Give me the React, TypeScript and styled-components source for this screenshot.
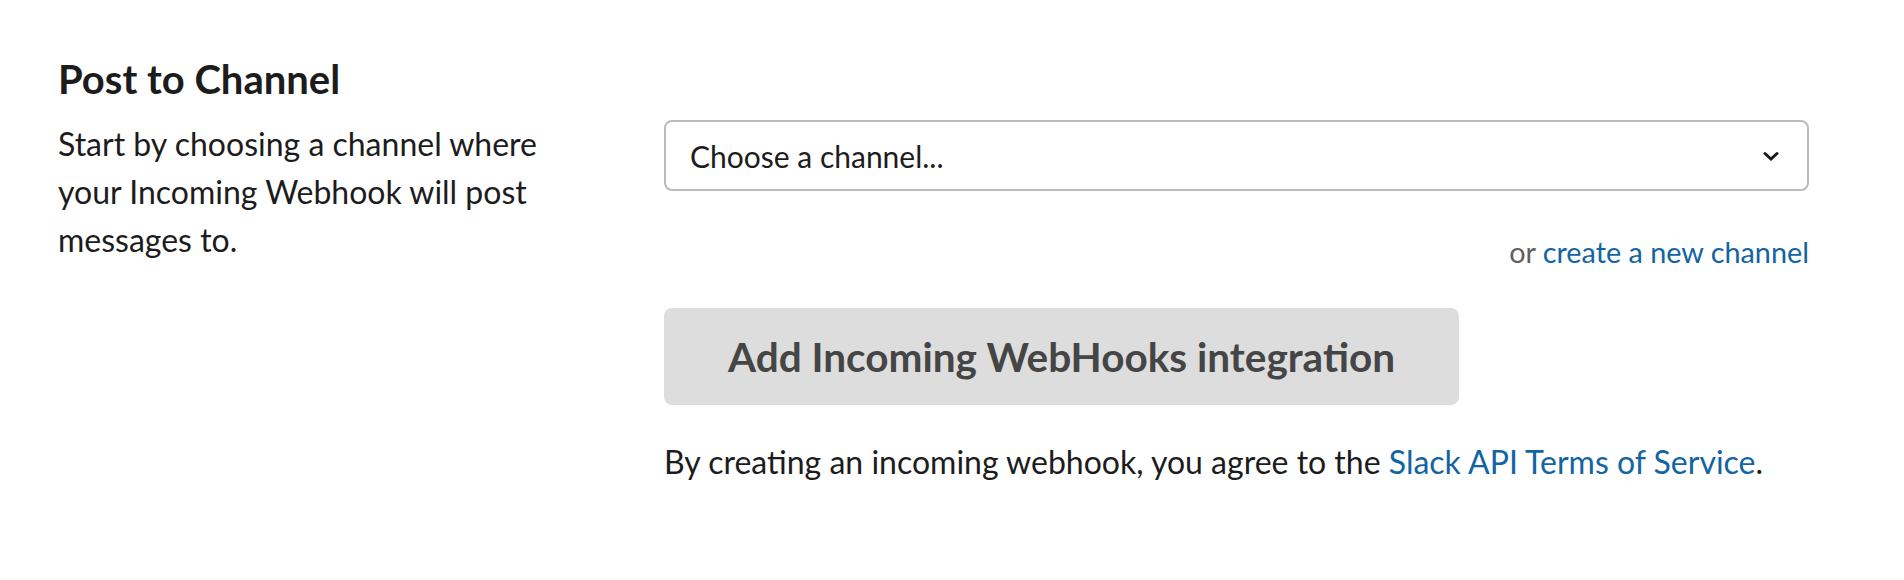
import React from "react";
import styled, { createGlobalStyle } from "styled-components";

const Global = createGlobalStyle`
  html, body { margin: 0; padding: 0; background: #ffffff; }
  body { font-family: Lato, "Noto Sans", sans-serif; color: #1d1c1d; }
`;

const Page = styled.div`
  padding: 55px 0 0 58px;
`;

const Heading = styled.h3`
  margin: 0;
  font-size: 40px;
  line-height: 48px;
  font-weight: 700;
  color: #1d1c1d;
`;

const Row = styled.div`
  display: grid;
  grid-template-columns: 606px 1145px;
  margin-top: 17px;
`;

const Description = styled.p`
  margin: 0;
  max-width: 520px;
  font-size: 32px;
  line-height: 48px;
`;

const Form = styled.div`
  display: flex;
  flex-direction: column;
  align-items: flex-start;
`;

const Select = styled.div`
  box-sizing: border-box;
  width: 100%;
  height: 71px;
  border: 2px solid #bbbbbb;
  border-radius: 8px;
  display: flex;
  align-items: center;
  justify-content: space-between;
  padding: 0 28px 0 24px;
  font-size: 30px;
  color: #1d1c1d;
`;

const Hint = styled.div`
  align-self: flex-end;
  margin-top: 37px;
  font-size: 28.8px;
  line-height: 48px;
  color: #616061;
`;

const Link = styled.a`
  color: #1264a3;
  text-decoration: none;
`;

const Button = styled.button`
  margin-top: 32px;
  border: none;
  border-radius: 8px;
  background: #dddddd;
  color: #454545;
  font-family: Lato, "Noto Sans", sans-serif;
  font-weight: 700;
  font-size: 40.5px;
  line-height: 53px;
  padding: 22px 64px;
`;

const Terms = styled.p`
  margin: 33px 0 0;
  font-size: 32px;
  line-height: 48px;
`;

const Chevron = () => (
  <svg width="16" height="10" viewBox="0 0 16 10" fill="none">
    <path d="M2 2.5l6 5.5 6-5.5" stroke="#1d1c1d" strokeWidth="3" strokeLinecap="round" strokeLinejoin="miter" />
  </svg>
);

export default function App() {
  return (
    <>
      <Global />
      <Page>
        <Heading>Post to Channel</Heading>
        <Row>
          <Description>
            Start by choosing a channel where your Incoming Webhook will post messages to.
          </Description>
          <Form>
            <Select>
              <span>Choose a channel...</span>
              <Chevron />
            </Select>
            <Hint>
              or <Link href="#">create a new channel</Link>
            </Hint>
            <Button>Add Incoming WebHooks integration</Button>
            <Terms>
              By creating an incoming webhook, you agree to the <Link href="#">Slack API Terms of Service</Link>.
            </Terms>
          </Form>
        </Row>
      </Page>
    </>
  );
}
